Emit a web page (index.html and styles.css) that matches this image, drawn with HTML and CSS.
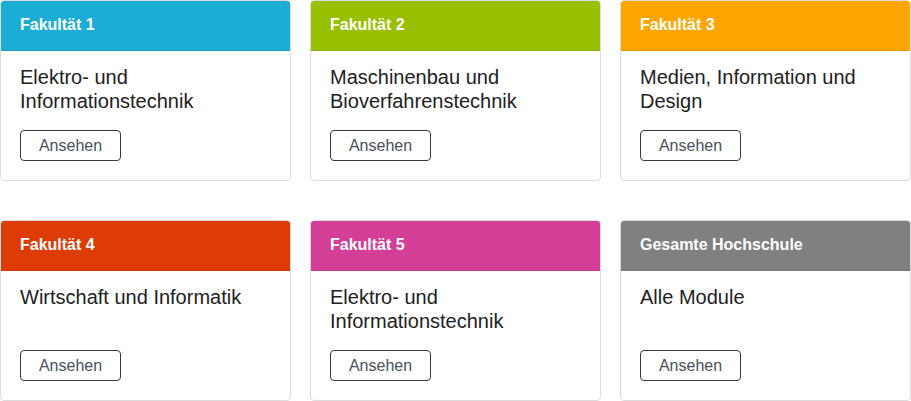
FILE: index.html
```html
<!DOCTYPE html>
<html lang="de">
<head>
<meta charset="utf-8">
<link rel="stylesheet" href="styles.css">
</head>
<body>
<div class="grid">
  <div class="card">
    <div class="card-header c1">Fakultät 1</div>
    <div class="card-body">
      <h2 class="card-title">Elektro- und Informationstechnik</h2>
      <button class="btn">Ansehen</button>
    </div>
  </div>
  <div class="card">
    <div class="card-header c2">Fakultät 2</div>
    <div class="card-body">
      <h2 class="card-title">Maschinenbau und Bioverfahrenstechnik</h2>
      <button class="btn">Ansehen</button>
    </div>
  </div>
  <div class="card">
    <div class="card-header c3">Fakultät 3</div>
    <div class="card-body">
      <h2 class="card-title">Medien, Information und Design</h2>
      <button class="btn">Ansehen</button>
    </div>
  </div>
  <div class="card">
    <div class="card-header c4">Fakultät 4</div>
    <div class="card-body">
      <h2 class="card-title">Wirtschaft und Informatik</h2>
      <button class="btn">Ansehen</button>
    </div>
  </div>
  <div class="card">
    <div class="card-header c5">Fakultät 5</div>
    <div class="card-body">
      <h2 class="card-title">Elektro- und Informationstechnik</h2>
      <button class="btn">Ansehen</button>
    </div>
  </div>
  <div class="card">
    <div class="card-header c6">Gesamte Hochschule</div>
    <div class="card-body">
      <h2 class="card-title">Alle Module</h2>
      <button class="btn">Ansehen</button>
    </div>
  </div>
</div>
</body>
</html>
```
FILE: styles.css
```css
html, body {
  margin: 0;
  padding: 0;
  background: #fff;
}
body {
  font-family: "Liberation Sans", Arial, sans-serif;
  color: #212121;
}
.grid {
  display: grid;
  grid-template-columns: 290px 290px 290px;
  grid-template-rows: 181px 181px;
  column-gap: 20px;
  row-gap: 39px;
  width: 911px;
}
.card {
  display: flex;
  flex-direction: column;
  border: 1px solid #dcdcdc;
  border-radius: 4px;
  overflow: hidden;
  box-sizing: border-box;
  width: 291px;
}
.card-header {
  height: 50px;
  box-sizing: border-box;
  padding: 0 19px 1px;
  display: flex;
  align-items: center;
  color: #fff;
  font-weight: bold;
  font-size: 16px;
  border-bottom: 1px solid rgba(0,0,0,0.08);
}
.c1 { background: #1badd6; }
.c2 { background: #98c000; }
.c3 { background: #ffa500; }
.c4 { background: #dd3c07; }
.c5 { background: #d33e97; }
.c6 { background: #808080; }
.card-body {
  flex: 1;
  display: flex;
  flex-direction: column;
  align-items: flex-start;
  padding: 14px 19px 19px;
}
.card-title {
  margin: 0;
  font-weight: normal;
  font-size: 20px;
  line-height: 24px;
  color: #212121;
}
.btn {
  margin-top: auto;
  width: 101px;
  height: 31px;
  box-sizing: border-box;
  background: #fff;
  border: 1px solid #343a40;
  border-radius: 4px;
  font-family: "Liberation Sans", Arial, sans-serif;
  font-size: 16px;
  color: #495057;
  padding: 0;
}
```
